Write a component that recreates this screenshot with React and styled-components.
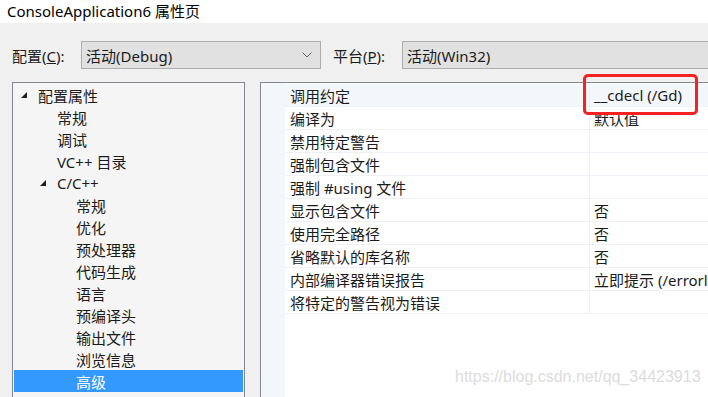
import React from 'react';
import styled, { createGlobalStyle } from 'styled-components';

const GlobalStyle = createGlobalStyle`
  html, body {
    margin: 0;
    padding: 0;
    background: #f0f0f0;
  }
  body {
    font-family: 'Noto Sans', 'Noto Sans CJK SC', sans-serif;
  }
`;

const FONT = `'Noto Sans', 'Noto Sans CJK SC', sans-serif`;

const Window = styled.div`
  width: 708px;
  height: 397px;
  overflow: hidden;
  position: relative;
  background: #f0f0f0;
  display: flex;
  flex-direction: column;
  font-family: ${FONT};
  color: #1b1b1b;
`;

const TitleBar = styled.div`
  height: 23px;
  flex: none;
  background: #ffffff;
  display: flex;
  align-items: center;
  padding-left: 7px;
  font-size: 15px;
  line-height: 1;
  color: #000;
  margin-top: -5px;
  padding-top: 5px;
`;

const Toolbar = styled.div`
  display: flex;
  align-items: center;
  height: 28px;
  margin-top: 18px;
  padding-left: 12px;
  flex: none;
`;

const Label = styled.span`
  font-size: 15px;
  width: ${p => p.width}px;
  flex: none;
  white-space: nowrap;
`;

const Combo = styled.div`
  box-sizing: border-box;
  height: 28px;
  width: ${p => (p.width ? `${p.width}px` : '320px')};
  flex: none;
  margin-right: ${p => p.gap || 0}px;
  border: 1px solid #adadad;
  background: #e1e1e1;
  display: flex;
  align-items: center;
  padding-left: 4px;
  padding-right: 8px;
  font-size: 15px;
  white-space: nowrap;
  justify-content: space-between;
`;

const Chevron = () => (
  <svg width="10" height="6" viewBox="0 0 10 6">
    <polyline points="0.5,0.5 5,5 9.5,0.5" fill="none" stroke="#606060" strokeWidth="1" />
  </svg>
);

const Body = styled.div`
  display: flex;
  flex: 1;
  margin-top: 13px;
  padding-left: 12px;
  gap: 15px;
  min-height: 0;
`;

const Tree = styled.div`
  box-sizing: border-box;
  width: 233px;
  flex: none;
  border: 1px solid #828790;
  border-bottom: none;
  background: #f5f5f5;
  padding: 1px 1px 0;
`;

const TreeRow = styled.div`
  height: 22px;
  display: flex;
  align-items: center;
  font-size: 15px;
  padding-left: ${p => p.level * 19 + 24}px;
  position: relative;
  background: ${p => (p.selected ? '#3399ff' : 'transparent')};
  color: ${p => (p.selected ? '#ffffff' : '#1b1b1b')};
  white-space: nowrap;
`;

const Arrow = styled.svg`
  position: absolute;
  left: ${p => p.level * 19 + 7}px;
  top: 8px;
`;

const Grid = styled.div`
  flex: 1;
  border-left: 1px solid #828790;
  border-top: 1px solid #828790;
  background: #ffffff;
  display: flex;
  min-width: 460px;
`;

const Margin = styled.div`
  width: 24px;
  flex: none;
  background: #f3f7fc;
`;

const Rows = styled.div`
  flex: 1;
  padding-top: 1px;
`;

const PropRow = styled.div`
  height: 23px;
  box-sizing: border-box;
  display: grid;
  grid-template-columns: 304px 1fr;
  border-bottom: 1px solid #eef1f6;
  background: ${p => (p.active ? '#f3f7fc' : '#ffffff')};
  font-size: 15px;
`;

const Cell = styled.div`
  display: flex;
  align-items: center;
  padding-left: ${p => (p.value ? 4 : 5)}px;
  border-left: ${p => (p.value ? '1px solid #eef1f6' : 'none')};
  white-space: nowrap;
  overflow: hidden;
`;

const Highlight = styled.div`
  position: absolute;
  left: 583px;
  top: 74px;
  width: 115px;
  height: 41px;
  box-sizing: border-box;
  border: 3px solid #f52222;
  border-radius: 5px;
`;

const Watermark = styled.div`
  position: absolute;
  left: 455px;
  top: 368px;
  font-family: 'Liberation Sans', Arial, sans-serif;
  font-size: 16px;
  color: #dcdcdc;
  white-space: nowrap;
`;

const treeItems = [
  { label: '配置属性', level: 0, open: true },
  { label: '常规', level: 1 },
  { label: '调试', level: 1 },
  { label: 'VC++ 目录', level: 1 },
  { label: 'C/C++', level: 1, open: true },
  { label: '常规', level: 2 },
  { label: '优化', level: 2 },
  { label: '预处理器', level: 2 },
  { label: '代码生成', level: 2 },
  { label: '语言', level: 2 },
  { label: '预编译头', level: 2 },
  { label: '输出文件', level: 2 },
  { label: '浏览信息', level: 2 },
  { label: '高级', level: 2, selected: true },
];

const props = [
  ['调用约定', '__cdecl (/Gd)'],
  ['编译为', '默认值'],
  ['禁用特定警告', ''],
  ['强制包含文件', ''],
  ['强制 #using 文件', ''],
  ['显示包含文件', '否'],
  ['使用完全路径', '否'],
  ['省略默认的库名称', '否'],
  ['内部编译器错误报告', '立即提示 (/errorl'],
  ['将特定的警告视为错误', ''],
];

const App = () => (
  <Window>
    <GlobalStyle />
    <TitleBar>ConsoleApplication6 属性页</TitleBar>
    <Toolbar>
      <Label width={69}>配置(<u>C</u>):</Label>
      <Combo width={240} gap={12}>
        <span>活动(Debug)</span>
        <Chevron />
      </Combo>
      <Label width={69}>平台(<u>P</u>):</Label>
      <Combo>
        <span>活动(Win32)</span>
      </Combo>
    </Toolbar>
    <Body>
      <Tree>
        {treeItems.map((item, i) => (
          <TreeRow key={i} level={item.level} selected={item.selected}>
            {item.open ? (
              <Arrow level={item.level} width="6" height="6" viewBox="0 0 6 6">
                <polygon points="6,0 6,6 0,6" fill="#1e1e1e" />
              </Arrow>
            ) : null}
            {item.label}
          </TreeRow>
        ))}
      </Tree>
      <Grid>
        <Margin />
        <Rows>
          {props.map(([name, value], i) => (
            <PropRow key={i} active={i === 0}>
              <Cell>{name}</Cell>
              <Cell value>{value}</Cell>
            </PropRow>
          ))}
        </Rows>
      </Grid>
    </Body>
    <Highlight />
    <Watermark>https://blog.csdn.net/qq_34423913</Watermark>
  </Window>
);

export default App;
